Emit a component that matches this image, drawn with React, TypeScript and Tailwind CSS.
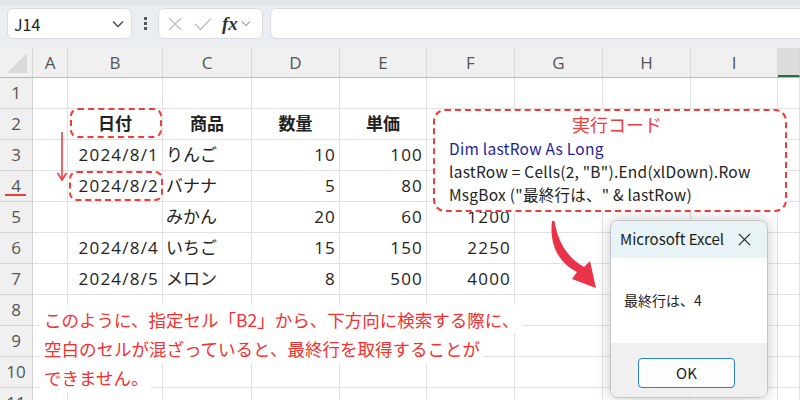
import React from 'react';

const COLS = ['A', 'B', 'C', 'D', 'E', 'F', 'G', 'H', 'I', 'J'];

type Row = string[];

// sheet content, columns A..J (F2:F4 sit under the code box)
const DATA: Row[] = [
  ['', '', '', '', '', '', '', '', '', ''],
  ['', '日付', '商品', '数量', '単価', '', '', '', '', ''],
  ['', '2024/8/1', 'りんご', '10', '100', '', '', '', '', ''],
  ['', '2024/8/2', 'バナナ', '5', '80', '', '', '', '', ''],
  ['', '', 'みかん', '20', '60', '1200', '', '', '', ''],
  ['', '2024/8/4', 'いちご', '15', '150', '2250', '', '', '', ''],
  ['', '2024/8/5', 'メロン', '8', '500', '4000', '', '', '', ''],
  ['', '', '', '', '', '', '', '', '', ''],
  ['', '', '', '', '', '', '', '', '', ''],
  ['', '', '', '', '', '', '', '', '', ''],
  ['', '', '', '', '', '', '', '', '', ''],
];

const Chevron = ({ className = '' }: { className?: string }) => (
  <svg viewBox="0 0 12 8" className={className} fill="none" stroke="currentColor" strokeWidth="1.3">
    <path d="M1 1.5 L6 6.5 L11 1.5" />
  </svg>
);

const Toolbar = () => (
  <div className="flex h-[48px] items-start border-t-[5px] border-[#e2e6e9] bg-[#eaeef1] pt-[3px]">
    <div className="ml-[7px] flex h-[31px] w-[125px] items-center justify-between rounded-md border border-[#d9dde1] bg-white pl-[6px] pr-[7px] text-[16px] text-[#222]">
      <span>J14</span>
      <Chevron className="h-[8px] w-[12px] text-[#444]" />
    </div>
    <div className="flex h-[31px] w-[26px] flex-col items-center justify-center gap-[2px]">
      <span className="h-[3px] w-[3px] bg-[#555]" />
      <span className="h-[3px] w-[3px] bg-[#555]" />
      <span className="h-[3px] w-[3px] bg-[#555]" />
    </div>
    <div className="flex h-[31px] w-[105px] items-center rounded-md border border-[#d9dde1] bg-white pl-[9px] pr-[4px]">
      <svg viewBox="0 0 14 14" className="h-[14px] w-[14px]" fill="none" stroke="#bdbdbd" strokeWidth="1.3">
        <path d="M1 1 L13 13 M13 1 L1 13" />
      </svg>
      <svg viewBox="0 0 18 14" className="ml-[12px] h-[14px] w-[18px]" fill="none" stroke="#bdbdbd" strokeWidth="1.3">
        <path d="M1 7 L6.5 12.5 L17 1.5" />
      </svg>
      <span className="ml-[10px] font-['Liberation_Serif',serif] text-[19px] font-bold italic leading-none text-[#333]">fx</span>
      <Chevron className="ml-[3px] h-[7px] w-[10px] text-[#999]" />
    </div>
    <div className="ml-[7px] h-[31px] flex-1 rounded-l-md border border-r-0 border-[#d9dde1] bg-white" />
  </div>
);

const Sheet = () => {
  const grid = 'grid grid-cols-[33px_35px_95px_89px_88px_87px_88px_88px_88px_87px_1fr]';
  return (
    <div className="font-['Open_Sans','Noto_Sans_CJK_JP',sans-serif] text-[17px] text-[#222]">
      {/* column headers */}
      <div className={`${grid} h-[30px] border-b border-[#b9b9b9] bg-[#f0f0f0]`}>
        <div className="relative border-r border-[#d4d4d4]">
          <svg viewBox="0 0 20 20" className="absolute bottom-[4px] right-[5px] h-[20px] w-[20px]">
            <polygon points="20,0 20,20 0,20" fill="#dadada" />
          </svg>
        </div>
        {COLS.map((c) => (
          <div
            key={c}
            className={`flex items-center justify-center border-r border-[#d8d8d8] text-[17px] text-[#555] ${
              c === 'J' ? 'border-b-2 border-b-[#217346] bg-[#dcdcdc]' : ''
            }`}
          >
            {c === 'J' ? '' : c}
          </div>
        ))}
      </div>
      {/* rows */}
      {DATA.map((row, r) => (
        <div key={r} className={`${grid} h-[31px]`}>
          <div className="flex items-center justify-center border-b border-r border-[#d4d4d4] bg-[#f0f0f0] text-[17px] text-[#555]">
            {r + 1}
          </div>
          {row.map((v, c) => {
            const header = r === 1;
            const left = c === 2 && !header;
            const align = header
              ? 'justify-center font-bold'
              : left
                ? 'justify-start pl-[3px]'
                : 'justify-end pr-[3px] tracking-[1.2px]';
            return (
              <div key={c} className={`flex items-center whitespace-nowrap border-b border-r border-[#e1e1e1] ${align}`}>
                {v}
              </div>
            );
          })}
        </div>
      ))}
    </div>
  );
};

const Dialog = () => (
  <div className="absolute left-[610px] top-[220px] flex h-[178px] w-[158px] flex-col overflow-hidden rounded-lg border border-[#c4c4c4] bg-white shadow-[0_0_14px_rgba(0,0,0,0.22)]">
    <div className="flex h-[37px] items-center justify-between bg-[#e8f3f6] pl-[9px] pr-[16px] text-[15px] text-[#1b1b1b]">
      <span>Microsoft Excel</span>
      <svg viewBox="0 0 14 14" className="h-[13px] w-[13px]" fill="none" stroke="#222" strokeWidth="1.2">
        <path d="M1 1 L13 13 M13 1 L1 13" />
      </svg>
    </div>
    <div className="flex h-[85px] items-center pl-[13px] text-[14px] text-[#222]">最終行は、4</div>
    <div className="flex flex-1 items-start justify-center bg-[#f0f0f0] pt-[15px]">
      <div className="ml-[-5px] flex h-[30px] w-[97px] items-center justify-center rounded-[4px] border border-[#2b7fd4] bg-[#fdfdfd] text-[15px] text-[#222]">
        OK
      </div>
    </div>
  </div>
);

const CodeBox = () => (
  <div className="absolute left-[433px] top-[109px] h-[103px] w-[354px] rounded-xl border-2 border-dashed border-[#f23b3b] bg-white">
    <div className="pl-[14px] text-center text-[18px] leading-[26px] text-[#f23b3b]">実行コード</div>
    <div className="pl-[14px] text-[15.5px] leading-[23px] tracking-[0.25px] text-[#222]">
      <div className="text-[#1e1e98]">Dim lastRow As Long</div>
      <div>lastRow = Cells(2, "B").End(xlDown).Row</div>
      <div>MsgBox ("最終行は、" &amp; lastRow)</div>
    </div>
  </div>
);

const Note = () => (
  <div className="absolute left-[40px] top-[305px] flex flex-col text-[17.5px] leading-[29px] text-[#f72f2f]">
    <div className="w-fit bg-white pl-[4px] pr-[3px]">このように、指定セル「B2」から、下方向に検索する際に、</div>
    <div className="w-fit bg-white pl-[4px] pr-[3px]">空白のセルが混ざっていると、最終行を取得することが</div>
    <div className="w-fit bg-white pl-[4px] pr-[3px]">できません。</div>
  </div>
);

export default function App() {
  return (
    <div className="relative h-[400px] w-[800px] overflow-hidden bg-white font-['Noto_Sans_CJK_JP',sans-serif]">
      <Toolbar />
      <Sheet />

      {/* dashed markers on B2 and B4 */}
      <div className="absolute left-[70px] top-[108px] h-[30px] w-[92px] rounded-lg border-2 border-dashed border-[#f23b3b]" />
      <div className="absolute left-[69px] top-[171px] h-[30px] w-[94px] rounded-lg border-2 border-dashed border-[#f23b3b]" />

      {/* down arrow B2 -> B4 */}
      <svg className="absolute left-[55px] top-[131px] h-[52px] w-[14px]" viewBox="0 0 14 52" fill="none">
        <path d="M7 1 L7 48" stroke="#f23b3b" strokeWidth="1.6" />
        <path d="M2.5 42 L7 49 L11.5 42" stroke="#f23b3b" strokeWidth="1.6" />
      </svg>
      <div className="absolute left-[5px] top-[194px] h-[2px] w-[21px] bg-[#f23b3b]" />

      <CodeBox />

      {/* curved arrow to dialog */}
      <svg className="absolute left-[540px] top-[215px] h-[80px] w-[70px]" viewBox="0 0 70 80">
        <path
          d="M12 6 C9 30 19 48 37 57 L32 64 L56 73 L50 46 L44 52 C28 43 18 28 14.5 6 Z"
          fill="#ea3349"
        />
      </svg>

      <Dialog />
      <Note />
    </div>
  );
}
